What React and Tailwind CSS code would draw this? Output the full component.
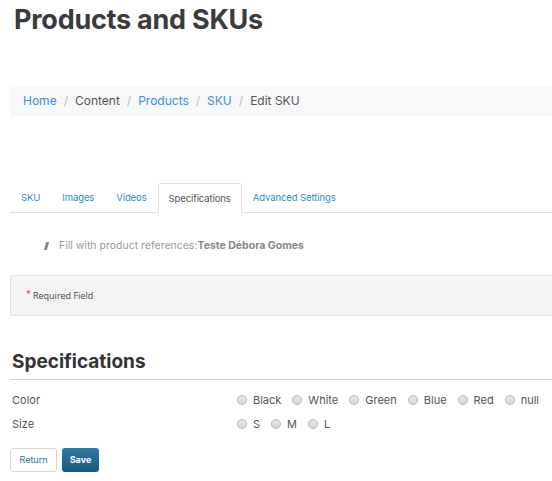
import React from "react";

function Radio({ label }) {
  return (
    <label className="flex items-center gap-[6px] mr-[11px]">
      <span className="inline-block w-[10px] h-[10px] rounded-full border border-[#b5b5b5] bg-gradient-to-b from-[#e8e8e8] to-[#d6d6d6]" />
      <span>{label}</span>
    </label>
  );
}

export default function App() {
  const tabs = ["SKU", "Images", "Videos", "Specifications", "Advanced Settings"];
  return (
    <div className="w-[552px] h-[481px] overflow-hidden bg-white text-[#444]" style={{ fontFamily: "Lato, 'Open Sans', sans-serif" }}>
      <h1 className="pl-[14px] pt-[3px] text-[27px] leading-[34px] font-bold text-[#3b3b3b] tracking-[-0.25px]" style={{ fontFamily: "Inter, 'Open Sans', sans-serif" }}>
        Products and SKUs
      </h1>
      <div className="ml-[10px] mt-[50px] h-[29px] bg-[#f7f8f9] flex items-center pl-[13px] pb-[1px] text-[12px] text-[#555]" style={{ fontFamily: "Inter, sans-serif" }}>
        <span className="text-[#3c8fe8]">Home</span>
        <span className="mx-[7px] text-[#bbb]">/</span>
        <span>Content</span>
        <span className="mx-[7px] text-[#bbb]">/</span>
        <span className="text-[#3c8fe8]">Products</span>
        <span className="mx-[7px] text-[#bbb]">/</span>
        <span className="text-[#3c8fe8]">SKU</span>
        <span className="mx-[7px] text-[#bbb]">/</span>
        <span>Edit SKU</span>
      </div>
      <div className="ml-[10px] mt-[67px] flex border-b border-[#dcdcdc] h-[30px] text-[9.5px] tracking-[-0.1px]" style={{ fontFamily: "Inter, sans-serif" }}>
        {tabs.map((t) => (
          <div
            key={t}
            className={
              t === "Specifications"
                ? "px-[10px] pt-[2px] flex items-center border border-b-0 border-[#dcdcdc] rounded-t-[3px] bg-white text-[#555] -mb-px h-[30px]"
                : "px-[11px] pt-[2px] flex items-center text-[#2c8ad2]"
            }
          >
            {t}
          </div>
        ))}
      </div>
      <div className="flex items-center mt-[25px] pl-[45px] text-[10.5px] text-[#999]" style={{ fontFamily: "Inter, sans-serif" }}>
        <span className="inline-block w-[3px] h-[8px] bg-[#888] skew-x-[-15deg] mr-[11px]" />
        <span>Fill with product references:</span>
        <span className="font-bold text-[#888]">Teste Débora Gomes</span>
      </div>
      <div className="ml-[10px] mt-[21px] h-[41px] bg-[#f4f4f4] border border-[#e2e2e2] border-r-0 rounded-l-[3px] flex items-center pl-[15px] text-[9px] text-[#444]" style={{ fontFamily: "'Open Sans', sans-serif" }}>
        <span className="text-[#e33] mr-[2px] -mt-[3px]">*</span>
        <span>Required Field</span>
      </div>
      <h2 className="ml-[12px] mt-[34px] text-[19px] leading-[24px] font-bold text-[#333]" style={{ fontFamily: "Inter, sans-serif" }}>
        Specifications
      </h2>
      <div className="ml-[10px] mt-[5px] border-b border-[#cfcfcf]" />
      <div className="text-[11px] text-[#555]" style={{ fontFamily: "Inter, sans-serif" }}>
        <div className="flex items-center h-[24px] mt-[8px] pl-[12px]">
          <span className="w-[225px]">Color</span>
          {["Black", "White", "Green", "Blue", "Red", "null"].map((l) => (
            <Radio key={l} label={l} />
          ))}
        </div>
        <div className="flex items-center h-[24px] pl-[12px]">
          <span className="w-[225px]">Size</span>
          {["S", "M", "L"].map((l) => (
            <Radio key={l} label={l} />
          ))}
        </div>
      </div>
      <div className="flex ml-[10px] mt-[12px] gap-[5px] text-[9px]" style={{ fontFamily: "Inter, sans-serif" }}>
        <button className="h-[24px] w-[47px] border border-[#d8d8d8] rounded-[3px] bg-white text-[#2a6f99]">Return</button>
        <button className="h-[24px] w-[37px] rounded-[3px] bg-gradient-to-b from-[#2b7ea6] to-[#17577a] text-white font-bold">Save</button>
      </div>
    </div>
  );
}
